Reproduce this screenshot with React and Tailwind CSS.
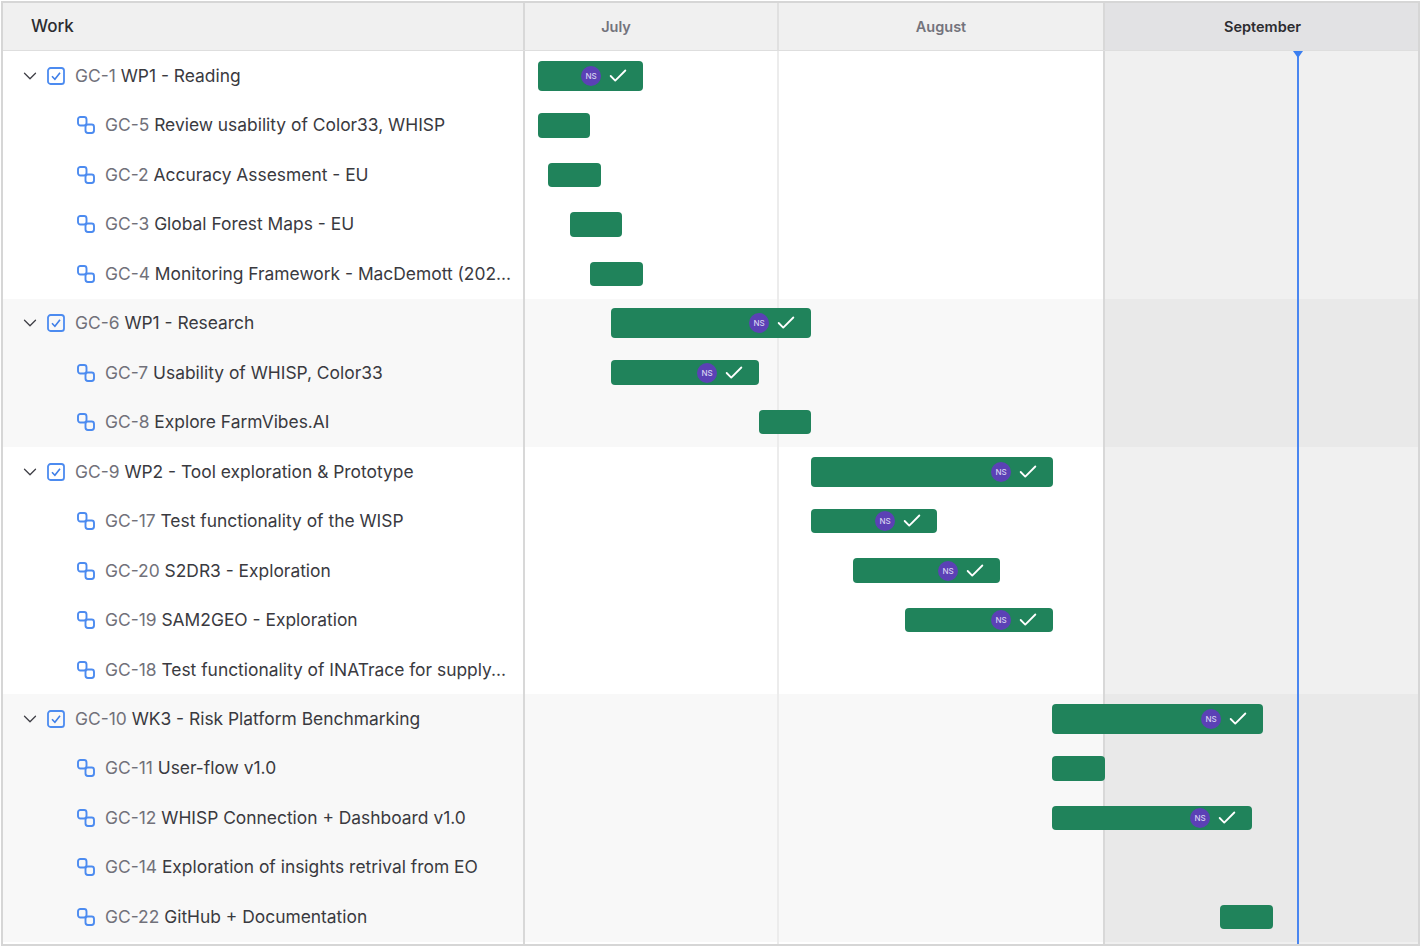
import React from 'react';
import { Check, ChevronDown } from 'lucide-react';

// x positions are measured from the left edge of the timeline
const items = [
  { id: 'GC-1', title: 'WP1 - Reading', parent: true, from: 13, to: 118, done: true },
  { id: 'GC-5', title: 'Review usability of Color33, WHISP', from: 13, to: 65 },
  { id: 'GC-2', title: 'Accuracy Assesment - EU', from: 23, to: 76 },
  { id: 'GC-3', title: 'Global Forest Maps - EU', from: 45, to: 97 },
  { id: 'GC-4', title: 'Monitoring Framework - MacDemott (202...', from: 65, to: 118 },
  { id: 'GC-6', title: 'WP1 - Research', parent: true, band: true, from: 86, to: 286, done: true },
  { id: 'GC-7', title: 'Usability of WHISP, Color33', band: true, from: 86, to: 234, done: true },
  { id: 'GC-8', title: 'Explore FarmVibes.AI', band: true, from: 234, to: 286 },
  { id: 'GC-9', title: 'WP2 - Tool exploration & Prototype', parent: true, from: 286, to: 528, done: true },
  { id: 'GC-17', title: 'Test functionality of the WISP', from: 286, to: 412, done: true },
  { id: 'GC-20', title: 'S2DR3 - Exploration', from: 328, to: 475, done: true },
  { id: 'GC-19', title: 'SAM2GEO - Exploration', from: 380, to: 528, done: true },
  { id: 'GC-18', title: 'Test functionality of INATrace for supply...' },
  { id: 'GC-10', title: 'WK3 - Risk Platform Benchmarking', parent: true, band: true, from: 527, to: 738, done: true },
  { id: 'GC-11', title: 'User-flow v1.0', band: true, from: 527, to: 580 },
  { id: 'GC-12', title: 'WHISP Connection + Dashboard v1.0', band: true, from: 527, to: 727, done: true },
  { id: 'GC-14', title: 'Exploration of insights retrival from EO', band: true },
  { id: 'GC-22', title: 'GitHub + Documentation', band: true, from: 695, to: 748 },
];

function EpicIcon() {
  return (
    <svg width="18" height="18" viewBox="0 0 18 18" fill="none" className="shrink-0">
      <rect x="1" y="1" width="16" height="16" rx="2.6" stroke="#4c8bf0" strokeWidth="1.8" />
      <path d="M5 9.2 L7.9 12.2 L13 5.8" stroke="#3f7fe8" strokeWidth="1.6" fill="none" />
    </svg>
  );
}

function SubtaskIcon() {
  return (
    <svg width="18" height="18" viewBox="0 0 18 18" fill="none" className="shrink-0">
      <rect x="1" y="1" width="8.5" height="8.5" rx="2.4" stroke="#4c8bf0" strokeWidth="1.9" />
      <rect x="8.5" y="8.5" width="8.5" height="8.5" rx="2.4" stroke="#4c8bf0" strokeWidth="1.9" />
    </svg>
  );
}

function Bar({ item }) {
  if (item.from === undefined) return null;
  return (
    <div
      className={`relative z-10 flex items-center justify-end rounded-[4px] bg-[#20835b] ${item.parent ? 'h-[30px]' : 'h-[24.5px]'}`}
      style={{ marginLeft: item.from, width: item.to - item.from }}
    >
      {item.done && (
        <div className="flex items-center gap-[6px] pr-[14px]">
          <span className="flex h-5 w-5 items-center justify-center rounded-full bg-[#5b41b5] text-[8px] font-medium text-[#d5d0f0]">NS</span>
          <Check size={22} strokeWidth={2} className="text-white" />
        </div>
      )}
    </div>
  );
}

function Row({ item }) {
  return (
    <div className={`flex h-[49.47px] items-center ${item.band ? 'bg-[#f8f8f8]' : ''}`}>
      <div className={`flex w-[522px] shrink-0 items-center pr-[13px] ${item.parent ? 'pl-[16px]' : 'pl-[73.5px]'}`}>
        {item.parent && <ChevronDown size={22} strokeWidth={1.4} className="mr-[5.5px] shrink-0 text-[#3f3f46]" />}
        {item.parent ? <EpicIcon /> : <SubtaskIcon />}
        <div className={`whitespace-nowrap text-[17.4px] leading-6 text-[#3a3a3f] ${item.parent ? 'ml-[10.5px]' : 'ml-[10.5px]'}`}>
          <span className="text-[#71717a]">{item.id}</span> {item.title}
        </div>
      </div>
      <div className="flex flex-1 items-center">
        <Bar item={item} />
      </div>
    </div>
  );
}

export default function App() {
  return (
    <div className="h-[950px] w-[1423px] bg-white pl-px pt-px font-['Inter',sans-serif]">
      <div className="flex h-[945px] w-[1419px] flex-col border-2 border-[#d6d6d6]">
        <div className="flex h-[48px] shrink-0 border-b border-[#dedede] bg-[#f0f0f0]">
          <div className="flex w-[522px] shrink-0 items-center border-r-2 border-[#d8d8d8] pl-7 text-[17px] font-medium text-[#2c2c30]">Work</div>
          <div className="flex w-[254px] items-center justify-center border-r-2 border-[#e0e0e0] pr-[70px] text-[14.5px] font-semibold text-[#73737c]">July</div>
          <div className="flex w-[324px] items-center justify-center text-[14.5px] font-semibold text-[#73737c]">August</div>
          <div className="flex flex-1 items-center justify-center border-l-2 border-[#d8d8d8] bg-[#e2e2e4] pl-0.5 text-[14.5px] font-semibold text-[#2c2c30]">September</div>
        </div>
        <div className="relative flex-1 pt-[0.2px]">
          {items.map((item) => (
            <Row key={item.id} item={item} />
          ))}
          {/* month columns + today marker lie over the rows */}
          <div className="pointer-events-none absolute inset-0 flex">
            <div className="w-[522px] shrink-0 border-r-2 border-[#d8d8d8]" />
            <div className="w-[254px] border-r-2 border-[#ececec]" />
            <div className="w-[324px]" />
            <div className="relative flex-1 border-l-2 border-[#d8d8d8] bg-black/6">
              <div className="absolute bottom-0 left-[192px] top-0 w-0.5 bg-[#4a86f0]" />
              <div className="absolute left-[188px] top-0 h-0 w-0 border-x-[5px] border-t-[7px] border-x-transparent border-t-[#3b7ff0]" />
            </div>
          </div>
        </div>
      </div>
    </div>
  );
}
